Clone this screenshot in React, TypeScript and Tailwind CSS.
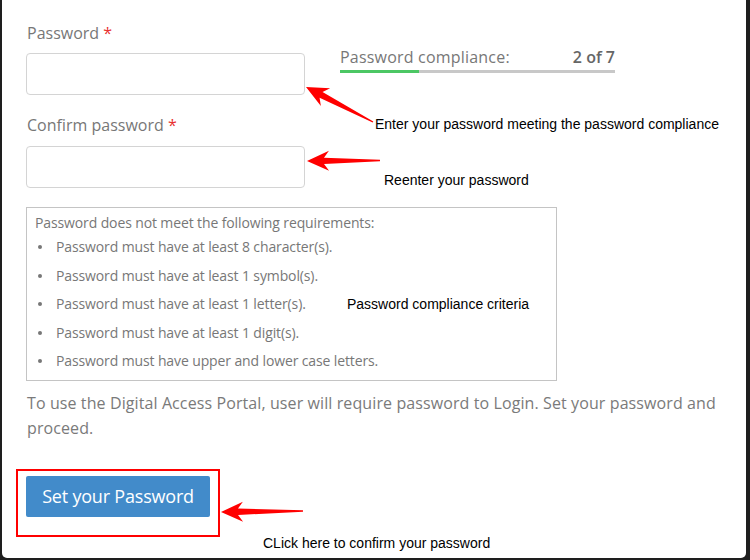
import React from "react";

type Pt = [number, number];

// tapered annotation arrow from tail to tip
function arrowPoints(tip: Pt, tail: Pt): string {
  const dx = tail[0] - tip[0];
  const dy = tail[1] - tip[1];
  const len = Math.hypot(dx, dy);
  const ux = dx / len;
  const uy = dy / len;
  const nx = -uy;
  const ny = ux;
  const at = (along: number, side: number): string =>
    `${tip[0] + ux * along + nx * side},${tip[1] + uy * along + ny * side}`;
  return [
    at(0, 0),
    at(22, 10),
    at(17, 3.2),
    at(len, 0.7),
    at(len, -0.7),
    at(17, -3.2),
    at(22, -10),
  ].join(" ");
}

const ARROWS: { tip: Pt; tail: Pt }[] = [
  { tip: [306, 87], tail: [373, 122] },
  { tip: [307, 161], tail: [380, 160.5] },
  { tip: [221, 512], tail: [303, 511] },
];

const REQUIREMENTS = [
  "Password must have at least 8 character(s).",
  "Password must have at least 1 symbol(s).",
  "Password must have at least 1 letter(s).",
  "Password must have at least 1 digit(s).",
  "Password must have upper and lower case letters.",
];

const font = "font-['Open_Sans',sans-serif]";
const note = "absolute font-['Liberation_Sans',Arial,sans-serif] text-[14px] leading-[16px] text-black whitespace-nowrap";

export default function App() {
  const inputCls =
    "block w-[279px] h-[42px] rounded-[4px] border border-[#d4d4d4] bg-white focus:outline-none";
  const labelCls = "block text-[16px] leading-[22px] text-[#777]";

  return (
    <div className={`relative w-[750px] h-[560px] bg-[#1e1e1e] overflow-hidden ${font}`}>
      <div className="ml-[2px] w-[744px] h-[558px] bg-white rounded-b-[5px] pt-[22px] pl-[24px]">
        <div className="flex">
          <div className="w-[279px]">
            <label className={`${labelCls} pl-px`}>
              Password <span className="text-[#e8312f]">*</span>
            </label>
            <input type="password" className={`${inputCls} mt-[9px]`} />
            <label className={`${labelCls} pl-px mt-[19px]`}>
              Confirm password <span className="text-[#e8312f]">*</span>
            </label>
            <input type="password" className={`${inputCls} mt-[10px]`} />
          </div>
          <div className="ml-[35px] mt-[24px] w-[275px]">
            <div className="flex justify-between text-[16px] leading-[22px] text-[#777]">
              <span className="tracking-[0.2px]">Password compliance:</span>
              <span className="font-semibold text-[#666]">2 of 7</span>
            </div>
            <div className="mt-[2px] h-[3px] bg-[#c8c8c8]">
              <div className="h-full bg-[#4cc764]" style={{ width: `${(2 / 7) * 100}%` }} />
            </div>
          </div>
        </div>

        <div className="mt-[19px] w-[531px] h-[174px] border border-[#c4c4c4] pl-[8px] pt-[5px] text-[14px] tracking-[-0.12px] text-[#777]">
          <p className="leading-[20px]">Password does not meet the following requirements:</p>
          <ul>
            {REQUIREMENTS.map((r) => (
              <li key={r} className="flex items-center leading-[28.5px]">
                <span className="ml-[3px] w-[4px] h-[4px] rounded-full bg-[#777]" />
                <span className="ml-[14px]">{r}</span>
              </li>
            ))}
          </ul>
        </div>

        <p className="mt-[10px] w-[705px] pl-px text-[16px] leading-[25px] tracking-[0.1px] text-[#7a7a7a]">
          To use the Digital Access Portal, user will require password to Login. Set your password and proceed.
        </p>

        <button
          type="button"
          className="mt-[35px] w-[184px] h-[41px] rounded-[2px] bg-[#428bca] text-white text-[18px] tracking-[-0.2px]"
        >
          Set your Password
        </button>
      </div>

      {/* annotations */}
      <div className="absolute left-[16px] top-[469px] w-[204px] h-[68px] border-2 border-[#f00]" />
      <svg className="absolute inset-0 pointer-events-none" width={750} height={560}>
        {ARROWS.map((a, i) => (
          <polygon key={i} points={arrowPoints(a.tip, a.tail)} fill="#f00" />
        ))}
      </svg>
      <span className={`${note} left-[375px] top-[116px]`}>
        Enter your password meeting the password compliance
      </span>
      <span className={`${note} left-[384px] top-[172px]`}>Reenter your password</span>
      <span className={`${note} left-[347px] top-[296px]`}>Password compliance criteria</span>
      <span className={`${note} left-[263px] top-[535px]`}>CLick here to confirm your password</span>
    </div>
  );
}
